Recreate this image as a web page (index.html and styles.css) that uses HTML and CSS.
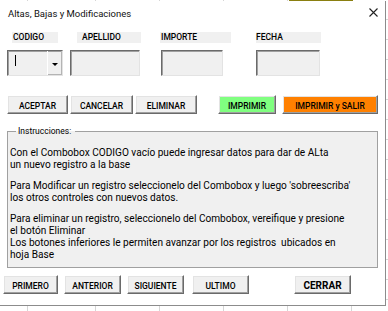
FILE: index.html
```html
<!DOCTYPE html>
<html lang="es">
<head>
    <meta charset="UTF-8">
    <meta name="viewport" content="width=device-width, initial-scale=1.0">
    <title>Altas, Bajas y Modificaciones</title>
    <link rel="stylesheet" href="styles.css">
</head>
<body>

<div class="dialog">
    <div class="titlebar">
        <span class="title">Altas, Bajas y Modificaciones</span>
        <svg class="close" width="9" height="9" viewBox="0 0 9 9">
            <path d="M0.5 0.5 L8.5 8.5 M8.5 0.5 L0.5 8.5" stroke="#222" stroke-width="1.1" fill="none"/>
        </svg>
    </div>

    <div class="fields">
        <div class="field f-codigo">
            <div class="label">CODIGO</div>
            <div class="box combo">
                <span class="caret"></span>
                <span class="drop"><span class="arrow"></span></span>
            </div>
        </div>
        <div class="field f-apellido">
            <div class="label">APELLIDO</div>
            <div class="box"></div>
        </div>
        <div class="field f-importe">
            <div class="label">IMPORTE</div>
            <div class="box"></div>
        </div>
        <div class="field f-fecha">
            <div class="label">FECHA</div>
            <div class="box"></div>
        </div>
    </div>

    <div class="actions">
        <button class="btn b-aceptar">ACEPTAR</button>
        <button class="btn b-cancelar">CANCELAR</button>
        <button class="btn b-eliminar">ELIMINAR</button>
        <button class="btn b-imprimir">IMPRIMIR</button>
        <button class="btn b-salir">IMPRIMIR y SALIR</button>
    </div>

    <fieldset class="help">
        <legend>Instrucciones:</legend>
        <p>Con el Combobox CODIGO vacío puede ingresar datos para dar de ALta<br>un nuevo registro a la base</p>
        <p>Para Modificar un registro seleccionelo del Combobox y luego 'sobreescriba'<br>los otros controles con nuevos datos.</p>
        <p class="tight">Para eliminar un registro, seleccionelo del Combobox, vereifique y presione<br>el botón Eliminar</p>
        <p>Los botones inferiores le permiten avanzar por los registros&nbsp; ubicados en<br>hoja Base</p>
    </fieldset>

    <div class="nav">
        <button class="btn n-primero">PRIMERO</button>
        <button class="btn n-anterior">ANTERIOR</button>
        <button class="btn n-siguiente">SIGUIENTE</button>
        <button class="btn n-ultimo">ULTIMO</button>
        <button class="btn n-cerrar">CERRAR</button>
    </div>
</div>

</body>
</html>
```

FILE: styles.css
```css
body {
    margin: 0;
    font-family: Roboto, "Liberation Sans", sans-serif;
    color: #000;
    background-color: #fff;
    background-image:
        linear-gradient(#8a7f10, #8a7f10),
        repeating-linear-gradient(90deg, transparent 0 63px, #d6d6d6 63px 64px),
        repeating-linear-gradient(180deg, transparent 0 19px, #d6d6d6 19px 20px);
    background-size: 64px 1px, auto, auto;
    background-position: 289px 0, 32px 0, 0 0;
    background-repeat: no-repeat, repeat, repeat;
    height: 311px;
    overflow: hidden;
}
.dialog {
    width: 386px;
    height: 305px;
    margin-top: 1px;
    box-sizing: border-box;
    background-color: #fff;
    border-right: 1px solid #8c8c8c;
    border-bottom: 1px solid #8c8c8c;
}
.titlebar {
    display: flex;
    align-items: flex-start;
    height: 31px;
    box-sizing: border-box;
    padding: 7px 7px 0 8px;
}
.title {
    font-size: 9.5px;
    line-height: 12px;
    color: #111;
}
.close {
    margin-left: auto;
}

/* campos */
.fields {
    display: flex;
    padding-left: 7px;
}
.field {
    display: flex;
    flex-direction: column;
}
.label {
    height: 11px;
    line-height: 11px;
    font-size: 8.5px;
    font-weight: 500;
    background-color: #f0f0f0;
    padding-left: 1px;
    box-sizing: border-box;
}
.box {
    height: 26px;
    margin-top: 7px;
    box-sizing: border-box;
    background-color: #f0f0f0;
    border: 1px solid;
    border-color: #6a6a6a #e3e3e3 #e3e3e3 #6a6a6a;
    box-shadow: inset 1px 1px #a0a0a0;
}
.f-codigo { width: 56px; margin-right: 7px; }
.f-codigo .label { width: 46px; margin-left: 5px; }
.f-apellido { width: 71px; margin-right: 19px; }
.f-apellido .label { margin-left: 7px; padding-left: 5px; }
.f-apellido .box { width: 70px; }
.f-importe { width: 71px; margin-right: 25px; }
.f-importe .box { width: 62px; margin-left: 1px; }
.f-fecha { width: 65px; }
.f-fecha .label { padding-left: 0; }
.f-fecha .box { width: 64px; }

.combo {
    display: flex;
}
.caret {
    width: 1px;
    height: 11px;
    margin: 4px 0 0 7px;
    background-color: #000;
}
.drop {
    margin-left: auto;
    width: 14px;
    display: flex;
    align-items: center;
    justify-content: center;
    border-left: 1px solid #fff;
    box-shadow: inset -1px -1px #b4b4b4;
}
.arrow {
    margin-top: 3px;
    border-top: 3px solid #000;
    border-left: 3px solid transparent;
    border-right: 3px solid transparent;
}

/* botones */
.btn {
    height: 19px;
    padding: 2px 0 0;
    box-sizing: border-box;
    font-family: Roboto, "Liberation Sans", sans-serif;
    font-size: 8.5px;
    font-weight: 500;
    color: #000;
    background-color: #f0f0f0;
    border: 1px solid;
    border-color: #fff #6a6a6a #6a6a6a #fff;
    box-shadow: inset -1px -1px #a0a0a0, inset 1px 1px #e3e3e3;
    cursor: pointer;
}
.actions {
    display: flex;
    margin-top: 19px;
    padding-left: 7px;
}
.b-aceptar { width: 61px; margin-right: 2px; }
.b-cancelar { width: 63px; margin-right: 2px; }
.b-eliminar { width: 62px; margin-right: 21px; }
.b-imprimir { width: 58px; margin-right: 6px; background-color: #80ff80; }
.b-salir { width: 96px; background-color: #ff8000; }

/* instrucciones */
.help {
    width: 371px;
    height: 142px;
    box-sizing: border-box;
    margin: 12px 0 0 7px;
    padding: 11px 2px 0;
    border: 1px solid #a0a0a0;
    background-color: #f0f0f0;
    font-size: 10.1px;
}
.help legend {
    margin-left: 6px;
    padding: 0 4px 0 2px;
    font-size: 8.5px;
    line-height: 10px;
}
.help p {
    margin: 0 0 9px;
    line-height: 12px;
}
.help p.tight {
    margin-bottom: 0;
}

.nav {
    display: flex;
    margin-top: 7px;
    padding-left: 3px;
}
.n-primero { width: 55px; margin-right: 6px; }
.n-anterior { width: 57px; margin-right: 6px; }
.n-siguiente { width: 57px; margin-right: 8px; }
.n-ultimo { width: 57px; margin-right: 45px; }
.n-cerrar { width: 57px; font-size: 10px; font-weight: bold; padding-top: 1px; }
```
